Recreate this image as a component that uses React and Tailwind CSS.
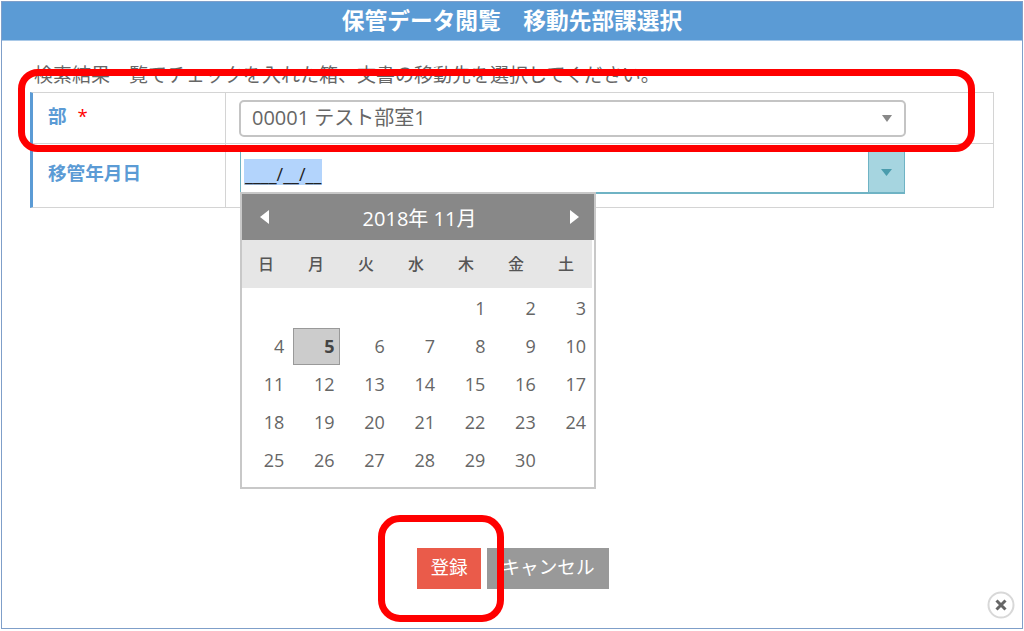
const weekdays = ['日', '月', '火', '水', '木', '金', '土'];
const days = [
  '', '', '', '', '1', '2', '3',
  '4', '5', '6', '7', '8', '9', '10',
  '11', '12', '13', '14', '15', '16', '17',
  '18', '19', '20', '21', '22', '23', '24',
  '25', '26', '27', '28', '29', '30', '',
];

const Calendar = () => (
  <div className="absolute left-[240px] top-[192px] w-[356px] h-[297px] border-2 border-[#c8c8c8] bg-white">
    <div className="h-[46px] bg-[#888888] text-white flex items-center justify-between pl-[17px] pr-[14px]">
      <svg width="11" height="14" viewBox="0 0 11 14"><path d="M10 0v14L1 7z" fill="#fff" /></svg>
      <span className="text-[20px] pt-[3px]">2018年 11月</span>
      <svg width="11" height="14" viewBox="0 0 11 14"><path d="M1 0v14l9-7z" fill="#fff" /></svg>
    </div>
    <div className="grid grid-cols-7 h-[48px] items-center bg-[#e6e6e6] mr-[2px] text-[#555] text-[16px] font-medium">
      {weekdays.map((w) => (
        <div key={w} className="text-center pr-[2px]">{w}</div>
      ))}
    </div>
    <div className="grid grid-cols-7 grid-rows-5 h-[191px] pt-[2px] text-[#666] text-[18px]">
      {days.map((d, i) => (
        <div key={i} className="flex items-center justify-end pr-[8px]">
          {d === '5' ? (
            <div className="w-[47px] h-[37px] -mr-[5px] bg-[#cccccc] border border-[#999] font-bold text-[#444] flex items-center justify-end pr-[4px]">5</div>
          ) : d}
        </div>
      ))}
    </div>
  </div>
);

const App = () => {
  return (
    <div className="relative w-[1024px] h-[631px] bg-white p-[1px] font-['Open_Sans','Noto_Sans_CJK_JP',sans-serif] overflow-hidden">
      <div className="h-[628px] w-[1022px] border border-[#7f9fc9] flex flex-col">
        <div className="h-[39px] shrink-0 bg-[#5b9bd5] border-b border-[#a9c9e8] text-white font-bold text-[22.7px] flex items-center justify-center leading-none">
          保管データ閲覧　移動先部課選択
        </div>

        <p className="ml-[32px] mt-[21px] h-[30px] text-[19px] leading-[27px] text-[#666] whitespace-nowrap">
          検索結果一覧でチェックを入れた箱、文書の移動先を選択してください。
        </p>

        <div className="ml-[28px] w-[964px] h-[116px] border border-[#d4d4d4] border-l-[3px] border-l-[#5b9bd5] grid grid-cols-[193px_1fr] grid-rows-[51px_1fr]">
          <div className="border-r border-b border-[#d4d4d4] pl-[15px] pt-[10px] text-[#5b9bd5] font-bold text-[18.6px] leading-[26px]">
            部 <span className="text-[#f00] ml-[6px] font-normal">*</span>
          </div>
          <div className="border-b border-[#d4d4d4] pl-[13px] pt-[7px]">
            <div className="w-[667px] h-[37px] border-2 border-[#c4c4c4] rounded-[5px] flex items-center justify-between pl-[11px] pr-[12px] pb-[1px] text-[#666] text-[20px]">
              <span>00001 テスト部室1</span>
              <svg width="10" height="8" viewBox="0 0 10 8"><path d="M0 1h10L5 8z" fill="#888" /></svg>
            </div>
          </div>
          <div className="border-r border-[#d4d4d4] pl-[15px] pt-[16px] text-[#5b9bd5] font-bold text-[18.6px] leading-[26px]">
            移管年月日
          </div>
          <div className="pl-[14px] pt-[8px]">
            <div className="w-[665px] h-[42px] border-l border-b-2 border-[#6fb3c4] flex justify-between">
              <span className="ml-[3px] h-[26px] mt-[7px] px-[1px] bg-[#b3d4fc] text-[#222] text-[18px] leading-[30px]">____/__/__</span>
              <div className="w-[37px] bg-[#a6d5e0] border-l border-r border-[#6fb3c4] flex items-center justify-center">
                <svg width="11" height="7" viewBox="0 0 11 7"><path d="M0 0h11L5.5 7z" fill="#4a9cad" /></svg>
              </div>
            </div>
          </div>
        </div>

        <div className="ml-[415px] mt-[340px] flex gap-[6px] text-white text-[18.6px]">
          <button className="w-[64px] h-[41px] pb-[3px] bg-[#ea5b4a]">登録</button>
          <button className="w-[122px] h-[41px] pb-[3px] bg-[#999999]">キャンセル</button>
        </div>
      </div>

      <Calendar />

      {/* red callouts drawn over the screenshot */}
      <div className="absolute left-[18px] top-[69px] w-[957px] h-[83px] border-[7px] border-[#ff0000] rounded-[20px]" />
      <div className="absolute left-[378px] top-[515px] w-[126px] h-[107px] border-[7px] border-[#ff0000] rounded-[22px]" />

      <svg className="absolute left-[987px] top-[591px]" width="28" height="28" viewBox="0 0 28 28">
        <circle cx="14" cy="14" r="12.5" fill="#fff" stroke="#d8d8d8" strokeWidth="2" />
        <path d="M9.5 9.5l9 9M18.5 9.5l-9 9" stroke="#666" strokeWidth="3" />
      </svg>
    </div>
  );
};

export default App;
